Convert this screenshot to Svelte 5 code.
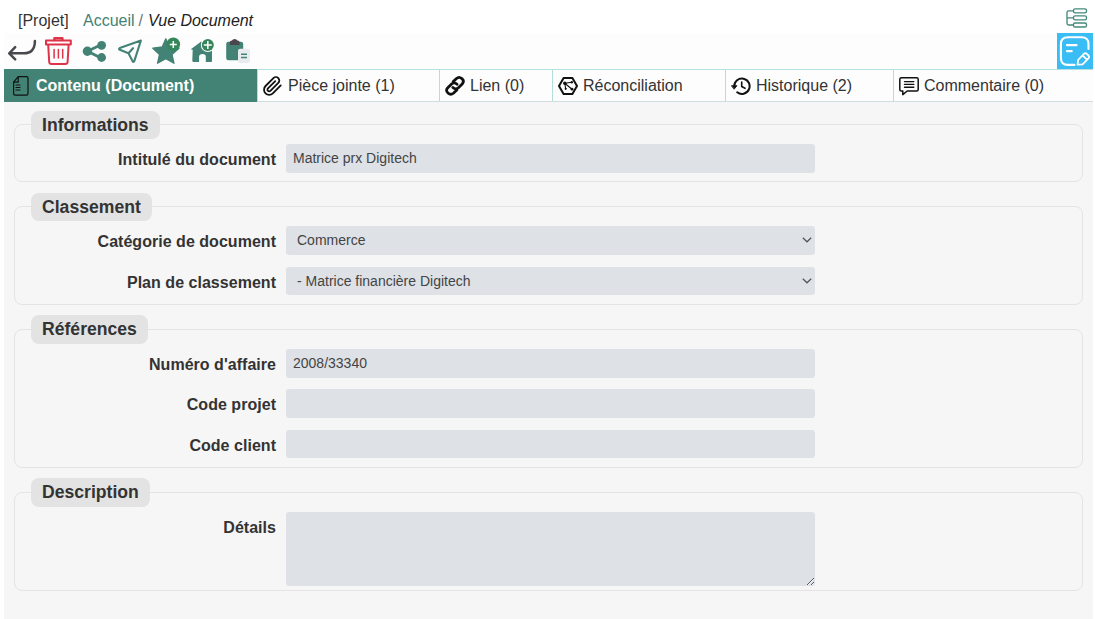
<script>
  const tabs = [
    { label: 'Contenu (Document)', icon: 'doc', width: 253 },
    { label: 'Pièce jointe (1)', icon: 'clip', width: 182 },
    { label: 'Lien (0)', icon: 'link', width: 113 },
    { label: 'Réconciliation', icon: 'hex', width: 173 },
    { label: 'Historique (2)', icon: 'history', width: 168 },
    { label: 'Commentaire (0)', icon: 'comment', width: 200 }
  ];
  const groups = [
    { title: 'Informations', rows: [{ label: 'Intitulé du document', type: 'text', value: 'Matrice prx Digitech' }] },
    {
      title: 'Classement',
      rows: [
        { label: 'Catégorie de document', type: 'select', value: 'Commerce' },
        { label: 'Plan de classement', type: 'select', value: '- Matrice financière Digitech' }
      ]
    },
    {
      title: 'Références',
      rows: [
        { label: "Numéro d'affaire", type: 'text', value: '2008/33340' },
        { label: 'Code projet', type: 'text', value: '' },
        { label: 'Code client', type: 'text', value: '' }
      ]
    },
    { title: 'Description', rows: [{ label: 'Détails', type: 'area', value: '' }] }
  ];
</script>

<div class="page">
  <header>
    <nav class="crumbs">
      <span class="proj">[Projet]</span>
      <span class="home">Accueil</span>
      <span class="sep">/</span>
      <em>Vue Document</em>
    </nav>
    <svg class="tree" width="22" height="20" viewBox="0 0 22 20" fill="none" stroke="#45897b" stroke-width="1.35">
      <rect x="7.5" y=".8" width="13" height="4" rx="1.6" />
      <rect x="7.5" y="7.8" width="13" height="4" rx="1.6" />
      <rect x="7.5" y="15" width="13" height="4" rx="1.6" />
      <path d="M7.5 2.8H2.7Q1 2.8 1 4.5V15.3Q1 17 2.7 17H7.5M1 9.8H7.5" />
    </svg>
  </header>

  <div class="toolbar">
    <div class="tools">
      <svg width="30" height="36" viewBox="0 0 30 36" fill="none" stroke="#4b484d" stroke-width="2.5" stroke-linecap="round" stroke-linejoin="round">
        <path d="M10.2 14.2 4.2 20.3 10.2 26.3M5 20.3H19C25.5 20.3 29.9 17 29.9 8" />
      </svg>
      <svg width="28" height="36" viewBox="0 0 28 36" fill="none" stroke="#df3349" stroke-width="2" stroke-linejoin="round" stroke-linecap="round">
        <path d="M1 7.6H25.8V11.4H1ZM3.2 11.8 4.2 29Q4.4 31 6.4 31H20.4Q22.4 31 22.6 29L23.6 11.8" />
        <path d="M9.4 7V5.2H17.4V7" stroke-width="2.4" />
        <path d="M9.1 16.5V25M13.4 16.5V25M17.7 16.5V25" stroke-width="1.5" />
      </svg>
      <svg class="share" width="25" height="36" viewBox="0 0 25 36" fill="#438375">
        <path d="M5.5 18.2 19.5 11.6M5.5 18.2 19.5 25.2" stroke="#438375" stroke-width="2.8" />
        <circle cx="5.4" cy="18.2" r="4.7" /><circle cx="19.6" cy="12.3" r="4.4" /><circle cx="19.6" cy="24.5" r="4.4" />
      </svg>
      <svg width="26" height="36" viewBox="0 0 26 36" fill="none" stroke="#438375" stroke-width="2.1" stroke-linejoin="round" stroke-linecap="round">
        <path d="M22.9 7.5 16.3 28.1Q15.6 29.6 14.5 28.1L10.5 20.2 1.8 16.8Q.4 15.9 1.8 15.1ZM10.5 20.2 15 15.2" />
      </svg>
      <svg class="star" width="29" height="36" viewBox="0 0 29 36">
        <path d="M13.8 5.8 17.5 14 27 15.2 20 21.5 22 30.3 13.8 25.7 5.5 30.3 7.5 21.5.8 15.2 10.2 14Z" fill="#438375" stroke="#438375" stroke-width="1.3" stroke-linejoin="round" />
        <circle cx="21.3" cy="11.3" r="6.8" fill="#358658" />
        <path d="M17.8 11.4H24.8M21.3 7.9V14.9" stroke="#fff" stroke-width="1.5" />
      </svg>
      <svg class="house" width="26" height="36" viewBox="0 0 26 36">
        <path d="M2.7 16.7.8 16.2 11.2 8.4 22 16.5V28Q22 29 21 29H15.8V23.4Q15.8 20.9 12.5 20.9T9.1 23.4V29H3.6Q2.3 29 2.3 27.8Z" fill="#438375" />
        <circle cx="17.8" cy="12" r="7" fill="#fff" /><circle cx="17.8" cy="12" r="6" fill="#358658" />
        <path d="M13.8 12H21.8M17.8 8V16" stroke="#fff" stroke-width="1.6" />
      </svg>
      <svg width="26" height="36" viewBox="0 0 26 36">
        <rect x=".2" y="8.8" width="17" height="18.4" rx="2.2" fill="#438375" />
        <path d="M3.8 9Q3.8 7.5 6 7.5 6.6 6 8.7 6T11.4 7.5Q13.6 7.5 13.6 9V12H3.8Z" fill="#4a464b" />
        <rect x="12" y="15.8" width="12" height="14.2" rx="2.3" fill="#e9ecef" />
        <path d="M15 21.2H21M15 24.6H21" stroke="#438375" stroke-width="1.5" />
      </svg>
    </div>
    <svg class="edit" width="36" height="36" viewBox="0 0 36 36" fill="none" stroke="#fff" stroke-linecap="round" stroke-linejoin="round">
      <rect width="36" height="36" fill="#3abdf5" stroke="none" />
      <path d="M31.5 16V11Q31.5 4.2 24.5 4.2H11Q3.9 4.2 3.9 11V25Q3.9 31.9 11 31.9H17.5" stroke-width="2.1" />
      <path d="M10 12.2H19.5M10 18.2H14.7" stroke-width="2.2" />
      <path d="M20.6 31.6 21.1 27 26.9 20.9Q28.4 19.5 29.8 20.9L31.4 22.5Q32.8 23.9 31.4 25.4L25.6 31.3 20.6 31.6ZM25.6 22.4 29.9 26.6" stroke-width="1.8" />
    </svg>
  </div>

  <div class="tabs">
    {#each tabs as t, i}
      <div class="tab" class:active={i === 0} style="width:{t.width}px">
        <svg width="20" height="22" viewBox="0 0 20 22" fill="none" stroke="#111" stroke-width="1.7" stroke-linecap="round" stroke-linejoin="round">
          {#if t.icon === 'doc'}
            <path d="M6.2 1.7H14.4Q16 1.7 16 3.3V18.6Q16 20.2 14.4 20.2H3.2Q1.6 20.2 1.6 18.6V7.2ZM6.2 1.7V7.2H1.6M4 10H8M4 12.5H8M4 15H8" stroke-width="1.2" />
          {:else if t.icon === 'clip'}
            <g transform="translate(-.7 .9) scale(.86)"><path d="M21.44 11.05l-9.19 9.19a6 6 0 0 1-8.49-8.49l9.19-9.19a4 4 0 0 1 5.66 5.66l-9.2 9.19a2 2 0 0 1-2.83-2.83l8.49-8.48" stroke-width="2.1" /></g>
          {:else if t.icon === 'link'}
            <g stroke-width="2.8"><path d="M8.3 6.6 11.5 3.5Q14.1 1.2 16.9 3.6T17.2 9L13.4 12.7Q10.6 15.1 7.9 12.5" /><path d="M11.8 15 8.4 18.2Q5.7 20.5 3 18T2.8 12.8L6.6 9Q9.3 6.7 12 9.2" /></g>
          {:else if t.icon === 'hex'}
            <path d="M5.6 2.9H14.4L19 11 14.4 19.1H5.6L1 11Z" stroke-width="2" />
            <path d="M6.8 8.3 13.8 7.3M6.8 8.3 14 14.2M6.8 8.3 7.7 13.8" stroke-width="1.1" />
            <g fill="#111" stroke="none"><circle cx="6.8" cy="8.3" r="1.7" /><circle cx="13.8" cy="7.3" r="1.2" /><circle cx="14" cy="14.2" r="1.4" /><circle cx="7.7" cy="13.8" r="1.1" /></g>
          {:else if t.icon === 'history'}
            <path d="M3.2 11.2A7.7 7.7 0 1 1 6.2 17.3" stroke-width="2" />
            <path d="M.7 10.7H6L3.3 14Z" fill="#111" stroke-width=".8" />
            <path d="M10.7 7V11.5L14 13.3" stroke-width="1.6" />
          {:else}
            <path d="M2.4 2.8H17.6Q19.2 2.8 19.2 4.4V14.5Q19.2 16 17.6 16H8.2L3.8 19.6V16H2.4Q.8 16 .8 14.5V4.4Q.8 2.8 2.4 2.8Z" stroke-width="1.5" />
            <path d="M5.5 6.6H14.8M5.5 9.4H14.8M5.5 12.2H14.8" stroke-width="1.4" />
          {/if}
        </svg>
        <span>{t.label}</span>
      </div>
    {/each}
  </div>

  <main>
    {#each groups as g}
      <section class:last={g.title === 'Description'}>
        <h2>{g.title}</h2>
        {#each g.rows as r}
          <div class="row">
            <span class="label">{r.label}</span>
            {#if r.type === 'area'}
              <textarea aria-label={r.label}></textarea>
            {:else}
              <div class="field" class:select={r.type === 'select'}>
                <span>{r.value}</span>
                {#if r.type === 'select'}
                  <svg width="10" height="6" viewBox="0 0 10 6" fill="none" stroke="#505459" stroke-width="1.2"><path d="M.8.8 5 4.8 9.2.8" /></svg>
                {/if}
              </div>
            {/if}
          </div>
        {/each}
      </section>
    {/each}
  </main>
</div>

<style>
  :global(body) { margin: 0; background: #fff; overflow: hidden; }
  .page { width: 1095px; height: 619px; box-sizing: border-box; padding: 0 2px 0 4px; display: flex; flex-direction: column; overflow: hidden; font-family: "Liberation Sans", Arial, sans-serif; color: #333; }
  header { height: 33px; flex: none; display: flex; justify-content: space-between; align-items: flex-start; box-sizing: border-box; padding: 8px 5px 0 14px; }
  .crumbs { display: flex; font-size: 16px; line-height: 25px; white-space: pre; }
  .proj { width: 65px; }
  .home { color: #438375; }
  .sep { margin: 0 5px 0 4px; color: #6c757d; }
  .crumbs em { color: #222; letter-spacing: -0.05px; }
  .toolbar { height: 36px; flex: none; display: flex; justify-content: space-between; background: #fdfdfd; }
  .tools { display: flex; gap: 10px; padding-left: 1px; }
  .tools svg { overflow: visible; }
  .share { margin: 0 1px 0 -1px; }
  .star { margin-left: -2px; }
  .house { margin-left: -1px; }
  svg { flex: none; display: block; }
  .tabs { height: 33px; flex: none; display: flex; box-sizing: border-box; border-top: 1px solid #b4e2e0; border-bottom: 1px solid #cfdde2; background: #fdfdfd; }
  .tab { flex: none; box-sizing: border-box; display: flex; align-items: center; border-left: 1px solid #b4ded8; padding-left: 5px; font-size: 16px; white-space: nowrap; }
  .tab svg { margin-right: 5px; }
  .tab.active { background: #438375; color: #fff; font-weight: 700; padding-left: 8px; margin: -1px 0; border-left: 0; }
  .tab.active svg { margin-right: 4px; }
  main { flex: 1; background: #f6f6f6; padding: 22px 10px 0; display: flex; flex-direction: column; gap: 24px; }
  section { border: 1px solid #e6e3e3; border-radius: 8px; padding: 0 0 8.5px 16px; display: flex; flex-direction: column; gap: 11.7px; }
  section.last { padding-bottom: 4px; }
  h2 { margin: -14.5px 0 -6.5px; align-self: flex-start; height: 28.2px; line-height: 29px; padding: 0 11px; border-radius: 8px; background: #e3e3e3; font-size: 17.6px; font-weight: 700; }
  .row { display: flex; align-items: flex-start; }
  .label { width: 245px; text-align: right; font-size: 16px; font-weight: 700; line-height: 32px; height: 28px; margin-right: 10px; letter-spacing: 0.03px; }
  .field { width: 529px; height: 28.8px; box-sizing: border-box; display: flex; justify-content: space-between; align-items: center; padding: 0 3px 0 7px; border-radius: 3px; background: #dee1e6; color: #444; font-size: 14px; }
  .select { padding-left: 11px; }
  textarea { width: 529px; height: 74.5px; box-sizing: border-box; border: 0; border-radius: 3px; background: #dee1e6; margin: 0; resize: both; }
</style>
